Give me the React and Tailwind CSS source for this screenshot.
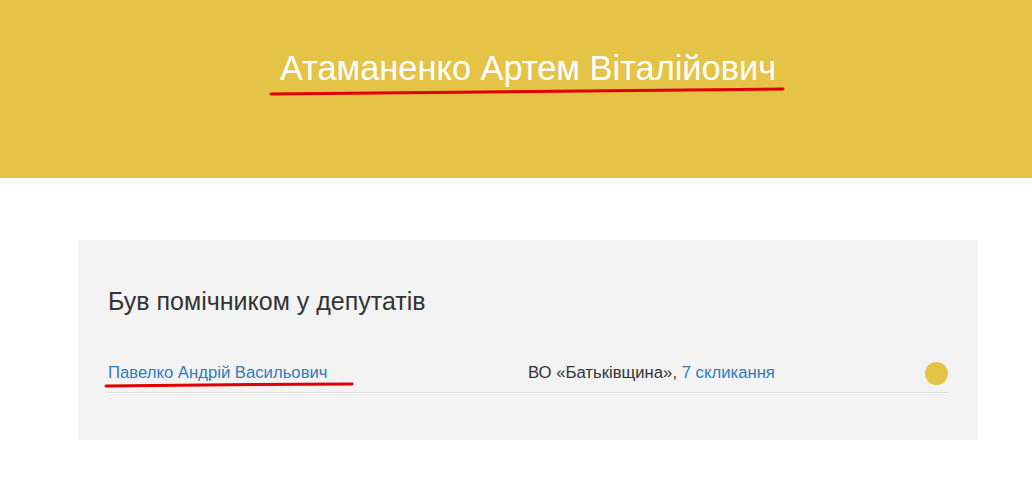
import React from 'react';

const App = () => {
  return (
    <div className="min-h-[491px] bg-white font-['Liberation_Sans',Arial,sans-serif]">
      {/* Шапка */}
      <header className="h-[178px] bg-[#e5c347] flex justify-center pt-[46px] pl-[24px]">
        <div className="relative h-fit">
          <h1 className="text-[34.4px] leading-[44px] text-white">Атаманенко Артем Віталійович</h1>
          <svg className="absolute left-[-11px] top-[41px]" width="516" height="10" viewBox="0 0 516 10">
            <path d="M2 7 C 120 6, 300 4, 514 2" stroke="#e00000" strokeWidth="3" fill="none" strokeLinecap="round" />
          </svg>
        </div>
      </header>

      <div className="pt-[62px] pl-[24px] flex justify-center">
        <section className="w-[900px] h-[200px] bg-[#f3f3f3] px-[30px] pt-[46px]">
          <h2 className="text-[25px] leading-[30px] text-[#333]">Був помічником у депутатів</h2>

          <div className="mt-[45px] flex items-center border-b border-[#dedede] pb-[7px]">
            <div className="relative w-[420px]">
              <a href="#" className="no-underline text-[16.7px] leading-[24px] text-[#337ab7]">Павелко Андрій Васильович</a>
              <svg className="absolute left-[-4px] top-[20px]" width="252" height="8" viewBox="0 0 252 8">
                <path d="M2 5 C 80 4, 170 3, 248 3" stroke="#e00000" strokeWidth="3" fill="none" strokeLinecap="round" />
              </svg>
            </div>
            <div className="flex-1 text-[16.7px] leading-[24px] text-[#333]">
              ВО «Батьківщина», <a href="#" className="no-underline text-[#337ab7]">7 скликання</a>
            </div>
            <span className="w-[23px] h-[23px] rounded-full bg-[#e5c347]" />
          </div>
        </section>
      </div>
    </div>
  );
};

export default App;
